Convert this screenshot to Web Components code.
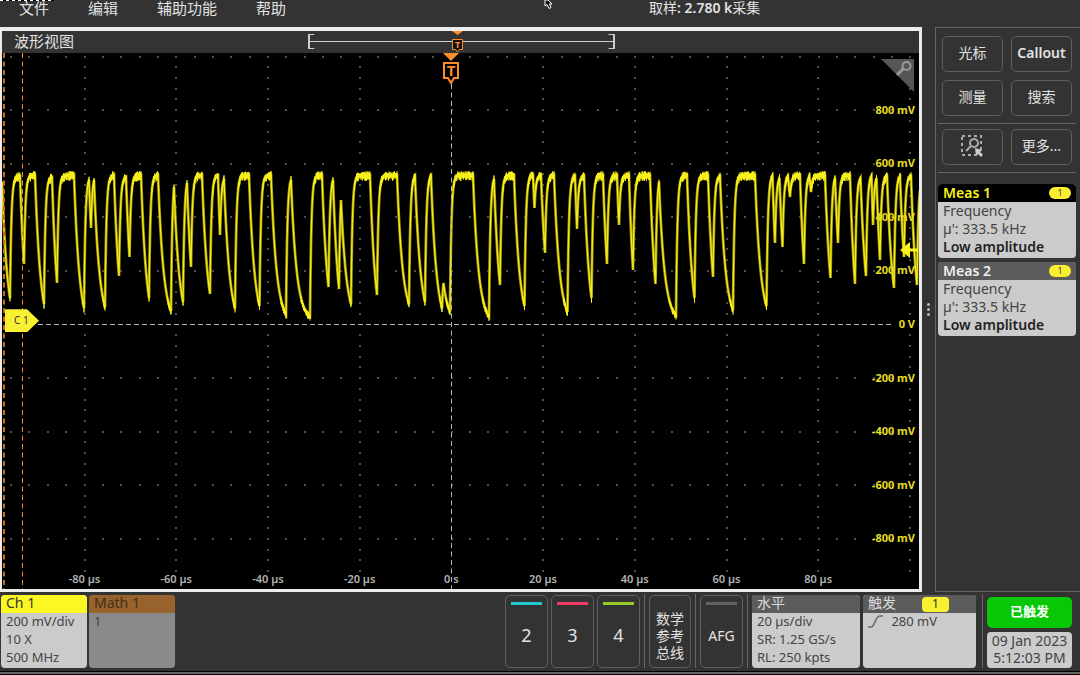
<!DOCTYPE html>
<html lang="zh-CN">
<head>
<meta charset="utf-8">
<title>波形视图</title>
<style>
html, body { margin: 0; }
body { background: #333; font-family: "Noto Sans", "Noto Sans CJK SC", sans-serif; color: #e2e2e2; }
</style>
</head>
<body>
<scope-app></scope-app>
<script>
const define = (name, html, setup) => {
  const template = document.createElement('template');
  template.innerHTML = `<style>*{box-sizing:border-box}button{font:inherit;color:inherit;background:none;border:0;margin:0;padding:0;cursor:pointer}</style>` + html;
  customElements.define(name, class extends HTMLElement {
    constructor() {
      super();
      this.attachShadow({ mode: 'open' }).append(template.content.cloneNode(true));
    }
    connectedCallback() { if (setup) setup(this, this.shadowRoot); }
  });
};

define('menu-bar', `
<style>
:host { display: block; position: relative; height: 27px; }
nav { display: flex; gap: 39px; padding-left: 19px; font-size: 15px; line-height: 16px; }
nav span { margin-left: 324px; font-size: 14px; font-weight: 600; }
nav i { font-style: normal; font-weight: 400; }
.edge { position: absolute; left: 0; top: 0; width: 54px; height: 1px; background: repeating-linear-gradient(90deg, #fff 0 3px, #000 3px 6px); }
.cursor { position: absolute; left: 50.4%; top: 0; }
</style>
<nav><button>文件</button><button>编辑</button><button>辅助功能</button><button>帮助</button><span><i>取样</i>: 2.780 k<i>采集</i></span></nav>
<div class="edge"></div>
<svg class="cursor" width="10" height="9" viewBox="0 0 10 9"><path d="M1 0V6L3 4.500L5 8.500L7 7.500L5.500 4H8L4 0Z" fill="#111" stroke="#fff"/></svg>
`);

define('scope-title', `
<style>
:host { display: flex; align-items: center; position: relative; height: 22px; padding-left: 12px; background: #333; font-size: 15px; line-height: 20px; padding-bottom: 2px; }
.range { position: absolute; left: 33.400%; width: 33.400%; top: 3px; height: 15px; border: 2px solid #ccc; border-width: 0 2px; }
.range::before { content: ""; position: absolute; inset: 7px 0 auto 0; height: 1px; background: #ccc; }
.range::after { content: ""; position: absolute; inset: 0 -2px; border: 1px solid #ccc; border-width: 1px 0; clip-path: polygon(0 0, 6px 0, 6px 100%, 0 100%, 0 0, 100% 0, 100% 100%, calc(100% - 6px) 100%, calc(100% - 6px) 0, 100% 0); }
svg { position: absolute; left: 49%; top: 0; }
text { font: bold 9px "Noto Sans", sans-serif; fill: #ff8c28; text-anchor: middle; }
</style>
<slot></slot><div class="range"></div>
<svg width="13" height="22" viewBox="0 0 13 22"><path d="M1 0H12L6.500 4Z" fill="#ff8c28"/><path d="M1.500 8.500H11.500V18.500H8.500L6.500 21L4.500 18.500H1.500Z" fill="#111" stroke="#ff8c28"/><text x="6.500" y="17">T</text></svg>
`);

/* Each entry: valley x, valley y, x where the next fall begins, crest y */
const TRACE = `10 298 20 176|24 264 35 175|44 304 52 177|57 283 74 175|84 308 89 180|91 228 94 180|105 307 114 175|119 276 126 177|129.5 257 141 175|149 298 158 175|171 311 174 187|183 302 187 183|191 267 202 175|210 294 218 175|220 235 224 179|235 308 249 175|259.5 306 271 175|286 314 291 180|310 316 322 175|328.500 287 333 180|339 289 341 200|351 304 370 175|377 295 397 175|409 304 415 176|425 302 431 176|442 308 443.5 283|450 312 473 175|489 316 494 179|500 285 514 175|524.5 306 533 175|534.5 208 541 175|545 253 554 175|567.5 312 575 176|577 229 584 176|591.5 298 603 175|607 264 617 175|619 225 629 175|633 270 650 175|655.5 284 659 182|676 315 687 175|694.5 298 708 175|713 277 720 176|733 310 755 175|766.5 306 772.5 176|775 243 779.5 178|782.5 247 788 176|790 197 800 175|804 264 809.5 176|811 192 825 175|830.5 278 835 178|838 243 850 175|855 284 860.5 178|866 276 871.5 176|873 225 876.5 178|880 260 887 176|894 288 900 176|904 257 911 176|917 285 920 190`
  .split('|').map(s => s.split(' ').map(Number));

function buildTrace() {
  let seed = 7;
  const rnd = () => (seed = (seed * 16807) % 2147483647) / 2147483647;
  const pts = [];
  const ease = (x0, y0, x1, y1, tau) => {
    const n = Math.max(2, Math.round((x1 - x0) * 2)), span = x1 - x0, full = 1 - Math.exp(-span / tau);
    for (let i = 0; i <= n; i++) {
      const dx = span * i / n;
      pts.push([x0 + dx, y0 + (y1 - y0) * (1 - Math.exp(-dx / tau)) / full]);
    }
  };
  let px = 2, py = 182;
  for (const [vx, vy, fx, fy] of TRACE) {
    ease(px, py, vx, vy, 5.5);
    ease(vx, vy, fx, fy, 1.4);
    px = fx; py = fy;
  }
  const line = 'M' + pts.map(p => p[0].toFixed(1) + ' ' + p[1].toFixed(1)).join('L');
  let fuzz = '';
  for (const [x, y] of pts) {
    const r = y < 181 ? 5 : y > 297 ? 4 : y < 190 ? 4 : 0;
    if (r) fuzz += `M${x.toFixed(1)} ${(y - 1 - rnd() * (r - 2)).toFixed(1)}V${(y + 2 + rnd() * (r - 1)).toFixed(1)}`;
  }
  return [line, fuzz];
}

define('scope-plot', `
<style>
:host { display: block; position: relative; flex: 1; min-height: 300px; background: #000; overflow: hidden; }
.canvas { position: absolute; inset: 0; width: 100%; height: 100%; display: block; }
.y { position: absolute; inset: 30px 4px 24px auto; display: grid; grid-auto-rows: 1fr; align-items: center; text-align: right; color: #e6de22; font-size: 11px; line-height: 14px; font-weight: 700; }
.x { position: absolute; inset: auto 6% 3px 4%; display: grid; grid-template-columns: repeat(9, 1fr); text-align: center; color: #b4b4b4; font-size: 11px; line-height: 14px; font-weight: 600; }
.trig { position: absolute; left: 48%; top: 0; }
.zoom { position: absolute; right: 5px; top: 6px; }
.level { position: absolute; right: 1px; top: 35%; }
.tag { position: absolute; left: 3px; top: 47.800%; width: 34px; height: 23px; padding-left: 9px; background: #f8f030; color: #333; font-size: 10px; line-height: 23px; clip-path: polygon(0 0, 22px 0, 100% 50%, 22px 100%, 0 100%); }
text { font: bold 15px "Noto Sans", sans-serif; fill: #ff8c28; text-anchor: middle; }
</style>
<svg class="canvas" viewBox="2 53 917 536" preserveAspectRatio="none">
  <path class="dots" fill="#505050" shape-rendering="crispEdges"/>
  <path d="M38 324.500H893" stroke="#b4b4b4" stroke-dasharray="5 3"/>
  <path class="olive" fill="none" stroke="#9c9200" stroke-width="2.800"/>
  <path class="bright" fill="none" stroke="#f4ec1c" stroke-width="1.300"/>
  <path class="fuzz" fill="none" stroke="#f8f01c"/>
  <path d="M451.500 84V589" stroke="#b4b4b4" stroke-dasharray="5 3.500"/>
  <path d="M4 53V589" stroke="#c86c1c" stroke-width="2" stroke-dasharray="5 3.500"/>
  <path d="M22.500 53V589" stroke="#f0982c" stroke-dasharray="5 3.500"/>
</svg>
<div class="y"></div><div class="x"></div>
<div class="tag">C 1</div>
<svg class="trig" width="18" height="32" viewBox="0 0 18 32"><path d="M1 0H17L9 8Z" fill="#ff8c28"/><path d="M2 10H16V25H12L9 30L6 25H2Z" fill="#000" stroke="#ff8c28" stroke-width="2"/><text x="9" y="23">T</text></svg>
<svg class="zoom" width="33" height="33" viewBox="0 0 33 33"><path d="M0 0H33V33Z" fill="#555"/><circle cx="25.500" cy="7" r="4" fill="none" stroke="#999" stroke-width="2"/><path d="M22 10L16 16" stroke="#999" stroke-width="3"/></svg>
<svg class="level" width="18" height="18" viewBox="0 0 18 18"><path d="M0 9L10 1V7.500H18V10.500H10V17Z" fill="#fbf41c"/></svg>
`, (host, root) => {
  const $ = s => root.querySelector(s);
  let d = '';
  const dot = (x, y) => { d += `M${Math.round(x) - 1} ${Math.round(y) - 1}h2v2h-2z`; };
  for (let r = -5; r <= 4; r++) if (r) for (let c = -24; c <= 25; c++) dot(451.5 + c * 18.35, 324.5 + r * 53.6);
  for (let c = -4; c <= 5; c++) if (c) for (let r = -25; r <= 23; r++) if (r % 5) dot(451.5 + c * 91.7, 324.5 + r * 10.72);
  $('.dots').setAttribute('d', d);
  const [line, fuzz] = buildTrace();
  $('.olive').setAttribute('d', line);
  $('.bright').setAttribute('d', line);
  $('.fuzz').setAttribute('d', fuzz);
  $('.y').innerHTML = [800, 600, 400, 200, 0, -200, -400, -600, -800].map(v => `<span>${v} ${v ? 'mV' : 'V'}</span>`).join('');
  $('.x').innerHTML = [-80, -60, -40, -20, 0, 20, 40, 60, 80].map(v => `<span>${v} ${v ? 'µs' : 's'}</span>`).join('');
});

define('waveform-view', `
<style>
:host { display: flex; flex-direction: column; flex: 1; min-width: 0; border: solid #ececec; border-width: 4px 3px 3px 2px; }
</style>
<scope-title>波形视图</scope-title><scope-plot></scope-plot>
`);

define('meas-card', `
<style>
:host { display: block; border-radius: 4px; background: #cbcbcb; color: #444; font-size: 14px; line-height: 18px; height: 74px; --head: #5c5c5c; --ink: #f0f0f0; }
:host([active]) { --head: #000; --ink: #fbf41c; }
header { display: flex; align-items: center; justify-content: space-between; height: 18px; padding: 0 5px; border-radius: 4px 4px 0 0; background: var(--head); color: var(--ink); font-weight: 600; line-height: 16px; }
b { width: 22px; height: 12px; border-radius: 6px; background: #f8f030; color: #444; font-size: 9px; font-weight: 400; line-height: 12px; text-align: center; }
div { padding-left: 5px; }
p { margin: 0; }
strong { font-weight: 600; color: #222; }
</style>
<header><slot name="title"></slot><b>1</b></header>
<div><p>Frequency</p><p>µ': 333.5 kHz</p><p><strong>Low amplitude</strong></p></div>
`);

define('side-panel', `
<style>
:host { display: flex; flex-direction: column; width: 145px; flex: none; border: solid #666; border-width: 1px 0 1px 1px; padding: 8px 4px 0 2px; }
.keys { display: grid; grid-template-columns: 1fr 1fr; gap: 8px; padding: 0 4px 7px; border-bottom: 1px solid #666; margin-bottom: 5px; }
button { height: 36px; border: 1px solid #5e5e5e; border-radius: 5px; font-size: 14px; line-height: 30px; padding-bottom: 2px; }
.bold { font-weight: 600; }
svg { display: block; margin: auto; }
meas-card { margin-top: 4px; }
meas-card:first-of-type { margin-top: 6px; }
</style>
<div class="keys"><button>光标</button><button class="bold">Callout</button><button>测量</button><button>搜索</button></div>
<div class="keys"><button aria-label="缩放"><svg width="23" height="22" viewBox="0 0 23 22" fill="none" stroke="#aaa"><path d="M1 1H20V20H1Z" stroke-width="2" stroke-dasharray="3 3"/><circle cx="13" cy="8" r="4" stroke-width="2"/><path d="M10 11L5 16" stroke-width="2"/><path d="M14 13L21 15L19 17L22 20L20 22L17 19L15 21Z" fill="#ccc" stroke="none"/></svg></button><button>更多...</button></div>
<meas-card active><span slot="title">Meas 1</span></meas-card>
<meas-card><span slot="title">Meas 2</span></meas-card>
`);

define('info-card', `
<style>
:host { display: block; border-radius: 4px; background: #cbcbcb; color: #444; font-size: 13px; line-height: 18px; }
header { height: 18px; padding-left: 5px; border-radius: 4px 4px 0 0; background: var(--head, #5c5c5c); color: var(--ink, #ddd); font-size: 14px; line-height: 16px; }
div { margin-top: -1px; padding-left: 5px; white-space: pre-line; }
</style>
<header><slot name="title"></slot></header><div><slot></slot></div>
`);

define('channel-key', `
<style>
:host { display: block; width: 43px; }
button { position: relative; width: 100%; height: 100%; border: 1px solid #5e5e5e; border-radius: 5px; font-size: var(--size, 18px); line-height: 17px; padding-top: 8px; }
i { position: absolute; left: 5px; right: 5px; top: 6px; height: 3px; background: var(--bar, none); }
</style>
<button><i></i><slot></slot></button>
`);

define('settings-bar', `
<style>
:host { display: flex; height: 79px; padding: 3px 8px 3px 1px; }
.spacer { flex: 1; }
.keys { display: flex; gap: 3px; margin-right: 4px; }
.sep { width: 1px; background: #666; margin: -1px 4px 0; }
.ch { width: 86px; margin-right: 2px; --head: #fbf722; --ink: #333; }
.math { width: 86px; --head: #98622c; --ink: #40301c; background: #8a8a8a; }
.ref { width: 42px; }
.hor { width: 108px; }
.trg { width: 113px; margin-left: 3px; }
.trg b { display: inline-block; width: 27px; height: 15px; margin-left: 26px; vertical-align: top; margin-top: 2px; border-radius: 4px; background: #f8f030; color: #333; font-size: 12px; font-weight: 400; line-height: 14px; text-align: center; }
.trg svg { vertical-align: -2px; margin-right: 4px; }
.end { display: flex; flex-direction: column; width: 85px; padding-top: 2px; gap: 4px; }
.run { height: 31px; border-radius: 5px; background: #06c806; color: #fff; font-size: 13px; line-height: 26px; padding-bottom: 3px; font-weight: 700; }
time { flex: 1; border-radius: 4px; background: #cbcbcb; color: #444; font-size: 14px; line-height: 17px; text-align: center; white-space: pre-line; }
</style>
<info-card class="ch"><span slot="title">Ch 1</span>200 mV/div
10 X
500 MHz</info-card>
<info-card class="math"><span slot="title">Math 1</span>1</info-card>
<div class="spacer"></div>
<div class="keys"><channel-key style="--bar:#20c8cc">2</channel-key><channel-key style="--bar:#f03c64">3</channel-key><channel-key style="--bar:#98cc28">4</channel-key></div>
<div class="sep" style="margin-left:0"></div>
<channel-key class="ref" style="--size:14px">数学<br>参考<br>总线</channel-key>
<div class="sep"></div>
<channel-key style="--size:14px;--bar:#626262">AFG</channel-key>
<div class="sep"></div>
<info-card class="hor"><span slot="title">水平</span>20 µs/div
SR: 1.25 GS/s
RL: 250 kpts</info-card>
<info-card class="trg"><span slot="title">触发<b>1</b></span><svg width="16" height="13" viewBox="0 0 16 13"><path d="M0 12H3C7 12 7 1 12 1H15" fill="none" stroke="#667" stroke-width="1.500"/></svg> 280 mV</info-card>
<div class="sep" style="margin-left:6px"></div>
<div class="end"><button class="run">已触发</button><time datetime="2023-01-09T17:12:03">09 Jan 2023
5:12:03 PM</time></div>
`);

define('scope-app', `
<style>
:host { display: flex; flex-direction: column; min-height: 100vh; }
main { display: flex; flex: 1; }
.grip { width: 13px; display: flex; flex-direction: column; align-items: center; justify-content: center; gap: 2px; }
.grip i { width: 3px; height: 3px; border-radius: 2px; background: #bbb; }
footer { height: 4px; border: solid #000; border-width: 1px 0; background: #666; }
</style>
<menu-bar></menu-bar>
<main><waveform-view></waveform-view><div class="grip"><i></i><i></i><i></i></div><side-panel></side-panel></main>
<settings-bar></settings-bar>
<footer></footer>
`);
</script>
</body>
</html>
